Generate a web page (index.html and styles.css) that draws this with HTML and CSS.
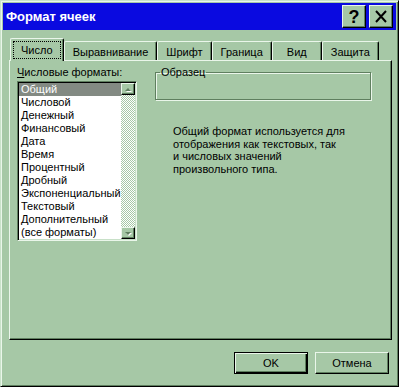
FILE: index.html
```html
<!DOCTYPE html>
<html>
<head>
	<meta charset="UTF-8">
	<title>Формат ячеек</title>
<link rel="stylesheet" href="styles.css">
</head>
<body>

<div class="window">
	<div class="titlebar">
		<span class="caption">Формат ячеек</span>
		<div class="caption-btns">
			<button class="cap-btn help">?</button>
			<button class="cap-btn close">
				<svg width="14" height="13" viewBox="0 0 14 13"><path d="M2 1 L12 12 M12 1 L2 12" stroke="#000" stroke-width="2" fill="none"/></svg>
			</button>
		</div>
	</div>

	<div class="content">
		<ul class="tabs">
			<li class="tab active"><span class="focus">Число</span></li>
			<li class="tab">Выравнивание</li>
			<li class="tab">Шрифт</li>
			<li class="tab">Граница</li>
			<li class="tab">Вид</li>
			<li class="tab">Защита</li>
		</ul>

		<div class="panel">
			<div class="formats">
				<div class="label"><u>Ч</u>исловые форматы:</div>
				<div class="listbox">
					<ul class="items">
						<li class="selected">Общий</li>
						<li>Числовой</li>
						<li>Денежный</li>
						<li>Финансовый</li>
						<li>Дата</li>
						<li>Время</li>
						<li>Процентный</li>
						<li>Дробный</li>
						<li>Экспоненциальный</li>
						<li>Текстовый</li>
						<li>Дополнительный</li>
						<li>(все форматы)</li>
					</ul>
					<div class="scrollbar">
						<span class="arrow"><svg width="7" height="5" viewBox="0 0 7 5"><path d="M1 5 L4 2 L7 5 Z" fill="#fff"/><path d="M0 4 L3 1 L6 4 Z" fill="#5f7f5f"/></svg></span>
						<span class="track"></span>
						<span class="arrow"><svg width="7" height="5" viewBox="0 0 7 5"><path d="M1 2 L4 5 L7 2 Z" fill="#fff"/><path d="M0 1 L3 4 L6 1 Z" fill="#5f7f5f"/></svg></span>
					</div>
				</div>
			</div>

			<div class="details">
				<fieldset class="sample">
					<legend>Образец</legend>
					<div class="sample-body"></div>
				</fieldset>
				<p class="desc">Общий формат используется для<br>отображения как текстовых, так<br>и числовых значений<br>произвольного типа.</p>
			</div>
		</div>

		<div class="footer">
			<button class="btn default">OK</button>
			<button class="btn">Отмена</button>
		</div>
	</div>
</div>

</body>
</html>
```

FILE: styles.css
```css
body {
	margin: 0;
	font: 11px "Liberation Sans", Arial, sans-serif;
	color: #000;
}
ul {
	margin: 0;
	padding: 0;
	list-style: none;
}
button {
	font: inherit;
	color: #000;
	padding: 0;
}
.window {
	width: 399px;
	height: 387px;
	box-sizing: border-box;
	background: #a6c8a6;
	border: 1px solid;
	border-color: #c9e2c9 #000 #000 #c9e2c9;
	box-shadow: inset 1px 1px 0 #eaf6ea, inset -1px -1px 0 #5f7f5f;
	padding: 2px;
	display: flex;
	flex-direction: column;
}

/* title */
.titlebar {
	height: 27px;
	flex: none;
	background: #0a0ae0;
	display: flex;
	align-items: center;
	justify-content: space-between;
	padding: 0 3px 0 3px;
}
.caption {
	color: #fff;
	font-weight: bold;
	font-size: 13px;
}
.caption-btns {
	display: flex;
	gap: 3px;
}
.cap-btn {
	width: 24px;
	height: 23px;
	box-sizing: border-box;
	background: #a6c8a6;
	border: 1px solid;
	border-color: #eaf6ea #000 #000 #eaf6ea;
	box-shadow: inset -1px -1px 0 #5f7f5f;
	display: flex;
	align-items: center;
	justify-content: center;
}
.help {
	font-weight: bold;
	font-size: 18px;
	line-height: 1;
}

/* tabs */
.content {
	flex: 1;
	padding: 8px 4px 0 6px;
}
.tabs {
	display: flex;
	align-items: flex-end;
	height: 22px;
	padding-left: 1px;
	position: relative;
	z-index: 1;
}
.tab {
	height: 19px;
	box-sizing: border-box;
	min-width: 50px;
	padding: 2px 8px 0;
	display: flex;
	align-items: center;
	justify-content: center;
	border: 1px solid;
	border-color: #eaf6ea #000 transparent #eaf6ea;
	border-bottom: none;
	border-radius: 2px 2px 0 0;
	box-shadow: inset -1px 0 0 #5f7f5f;
	white-space: nowrap;
}
.tab.active {
	height: 23px;
	min-width: 53px;
	margin-bottom: -1px;
	padding: 0 3px;
	background: #a6c8a6;
}
.focus {
	outline: 1px dotted #000;
	padding: 2px 7px;
}

/* panel */
.panel {
	height: 280px;
	box-sizing: border-box;
	border: 1px solid;
	border-color: #eaf6ea #000 #000 #eaf6ea;
	box-shadow: inset -1px -1px 0 #5f7f5f;
	display: flex;
	gap: 18px;
	padding: 5px 0 0 7px;
}
.label {
	line-height: 13px;
	margin-bottom: 2px;
}
.listbox {
	width: 120px;
	height: 160px;
	box-sizing: border-box;
	background: #fff;
	border: 1px solid;
	border-color: #5f7f5f #eaf6ea #eaf6ea #5f7f5f;
	box-shadow: inset 1px 1px 0 #000, inset -1px -1px 0 #c8e0c8;
	padding: 1px;
	display: flex;
}
.items {
	flex: 1;
}
.items li {
	line-height: 13px;
	padding-left: 2px;
	white-space: nowrap;
}
.items .selected {
	background: #838a83;
	color: #fff;
}
.scrollbar {
	width: 14px;
	display: flex;
	flex-direction: column;
}
.arrow {
	height: 12px;
	box-sizing: border-box;
	background: #a6c8a6;
	border: 1px solid;
	border-color: #eaf6ea #000 #000 #eaf6ea;
	box-shadow: inset -1px -1px 0 #5f7f5f;
	display: flex;
	align-items: center;
	justify-content: center;
}
.track {
	flex: 1;
	background: repeating-conic-gradient(#fff 0 25%, #a6c8a6 0 50%) 0 0 / 2px 2px;
}

/* sample */
.sample {
	width: 216px;
	box-sizing: border-box;
	margin: 0;
	padding: 0;
	border: 1px solid #5f7f5f;
	box-shadow: 1px 1px 0 #eaf6ea, inset 1px 1px 0 #eaf6ea;
}
.sample legend {
	padding: 0 1px;
	margin-left: 4px;
	line-height: 13px;
}
.sample-body {
	height: 20px;
}
.desc {
	margin: 25px 0 0 18px;
	line-height: 12.5px;
}

/* buttons */
.footer {
	display: flex;
	justify-content: flex-end;
	gap: 7px;
	margin-top: 12px;
	padding-right: 3px;
}
.btn {
	width: 74px;
	height: 22px;
	box-sizing: border-box;
	background: #a6c8a6;
	border: 1px solid;
	border-color: #eaf6ea #000 #000 #eaf6ea;
	box-shadow: inset -1px -1px 0 #5f7f5f;
}
.btn.default {
	border-color: #000;
	box-shadow: inset 1px 1px 0 #eaf6ea, inset -1px -1px 0 #000, inset -2px -2px 0 #5f7f5f;
}
```
